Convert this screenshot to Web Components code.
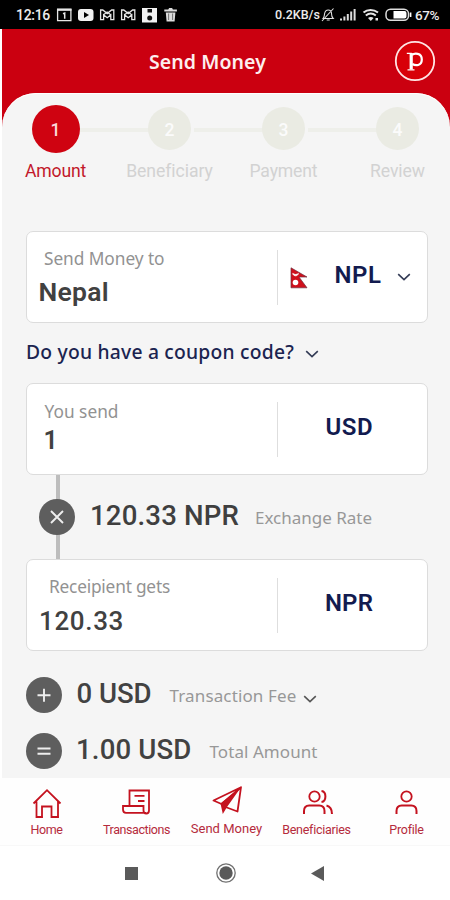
<!DOCTYPE html>
<html lang="en">
<head>
<meta charset="utf-8">
<title>Send Money</title>
<style>
html,body{margin:0;padding:0;background:#fff}
body{width:450px;height:900px;overflow:hidden;font-family:Roboto,"Liberation Sans",sans-serif}
</style>
</head>
<body>
<send-money-app></send-money-app>
<script>
const define = (name, html, setup) => customElements.define(name, class extends HTMLElement {
  connectedCallback() {
    if (this.shadowRoot) return;
    const t = document.createElement('template');
    t.innerHTML = typeof html === 'function' ? html(this) : html;
    this.attachShadow({mode: 'open'}).append(t.content.cloneNode(true));
    if (setup) setup(this);
  }
});

/* One line of text; `w` spreads the letters over a set width. */
define('ui-text', el => `<style>
  :host{display:block;white-space:pre;flex:none;font-size:${el.getAttribute('size')}px;font-weight:${el.getAttribute('weight') || 400};line-height:${el.getAttribute('lh') || 24}px}
  :host([noto]){font-family:"Noto Sans","Open Sans",sans-serif}
  </style><span>${el.getAttribute('text')}</span>`, el => {
  const w = +el.getAttribute('w'), s = el.shadowRoot.querySelector('span');
  if (w) {
    const n = s.textContent.length;
    s.style.letterSpacing = ((w - s.getBoundingClientRect().width) / n).toFixed(3) + 'px';
  }
});

define('chevron-down', `<style>:host{display:block;flex:none;width:14px;height:8px;color:#333b55}svg{display:block}</style>
<svg width="14" height="8" viewBox="0 0 14 8" fill="none" stroke="currentColor" stroke-width="1.6"><path d="M1.2 1.2 7 6.6l5.8-5.4"/></svg>`);

define('status-bar', `<style>
  :host{display:flex;flex:none;box-sizing:border-box;height:29px;background:#000;color:#ececec;padding:0 11px 0 16px;align-items:center;justify-content:space-between}
  div{display:flex;align-items:center}
  svg{display:block;flex:none}
  </style>
  <div><ui-text text="12:16" size="14" weight="500" w="34" lh="30"></ui-text>
  <svg width="122" height="18" viewBox="56 6 122 18" style="margin-left:6px">
    <g fill="none" stroke="#e6e6e6">
      <path stroke-width="1.3" d="M57.6 9.5h13.3v11.2H57.6z"/><path stroke-width="2.2" d="M57 9.7h14.5"/>
      <path stroke-width="1.5" d="M63 13.7l1.7-.6v5.7"/>
      <path stroke-width="1.3" d="M100.6 19.6V10h2.2l4.4 3.6 4.4-3.6h2.2v9.6h-3v-4.7l-3.6 2.8-3.6-2.8v4.7zM103.6 14.7l3.5-2.6 3.7 2.6"/>
      <path stroke-width="1.3" d="M121.6 19.6V10h2.2l4.4 3.6 4.4-3.6h2.2v9.6h-3v-4.7l-3.6 2.8-3.6-2.8v4.7zM124.6 14.7l3.5-2.6 3.7 2.6"/>
    </g>
    <rect x="78" y="9" width="15.5" height="12" rx="3" fill="#f2f2f2"/><path d="M84 12v6l5-3z" fill="#000"/>
    <path d="M142 8h15v14.5h-15z" fill="#f2f2f2"/><path d="M147.500 9h4.500v3.500h-4.500z" fill="#111"/><circle cx="149.700" cy="18" r="2.500" fill="#111"/>
    <path d="M164.3 9.6h4l.8-1.6h3l.8 1.6h4v2h-12.6zM165.8 12.5h9.6l-.8 9h-8z" fill="#dcdcdc"/><path d="M168.6 13.5v6.5m4-6.5v6.5" stroke="#555" stroke-width=".8"/>
  </svg></div>
  <div><ui-text text="0.2KB/s" size="12.500" weight="500" w="45" lh="30"></ui-text>
  <svg width="94" height="18" viewBox="321 6 94 18" style="margin-right:1px">
    <g fill="none" stroke="#e2e2e2" stroke-width="1.1"><path d="M324 18.5c1.6-1.8 1.2-3 1.6-5 .5-2.400 2-3.500 3.600-3.500 2 0 3.300 1.500 3.300 3.500 0 2 .2 3.400 1.700 5zM327.700 20h3M323 21l11.500-12.500"/></g>
    <path d="M341 18.500h2V20.500h-2zM344.400 16.500h2v4h-2zM347.800 14h2v6.500h-2zM351.200 11.500h2v9h-2zM354.600 9h2v11.500h-2z" fill="#ddd"/>
    <g fill="none" stroke="#e6e6e6" stroke-width="2"><path d="M364.500 12.500c4-3.500 10-3.500 14.500 0M366.800 15.500c3-2.400 7-2.400 10 0"/></g>
    <path d="M369 18c1.700-1.400 4-1.400 5.600 0l-2.800 3zM376.500 18h2.500v2.500h-2.500z" fill="#e6e6e6"/>
    <rect x="387" y="9.200" width="22.500" height="11" rx="4.500" fill="none" stroke="#ddd" stroke-width="1.500"/><path d="M394.500 11h11a2 2 0 0 1 2 2v3.500a2 2 0 0 1-2 2h-11zM410.800 12.500h1.600v4.500h-1.600z" fill="#fff"/>
  </svg>
  <ui-text text="67%" size="13.500" weight="500" w="24" lh="30"></ui-text></div>`);

define('app-header', `<style>
  :host{display:flex;justify-content:space-between;height:64px;color:#fdeeee;align-items:flex-start}
  ui-text{margin:20px 0 0 147px}
  .logo{margin:11px 14.500px 0 0;display:block}
  </style>
  <ui-text noto text="Send Money" size="19.500" weight="600" w="117" lh="26"></ui-text>
  <svg class="logo" width="42" height="42" viewBox="0 0 42 42"><circle cx="21" cy="21" r="19.200" fill="#d80008" stroke="#ffe4e4" stroke-width="1.800"/>
  <g fill="none" stroke="#fff"><path d="M17.200 13v16.500" stroke-width="3.200"/><path d="M12.800 13.300h5M13.500 29.800h7" stroke-width="1.300"/><path d="M18 15c2.200-2 9.800-2.600 9.800 4.500 0 6.500-6.300 6.500-9.500 4.500" stroke-width="2.200"/></g></svg>`);

define('step-item', el => `<style>
  :host{display:grid;grid-template-rows:49px 6px 24px;justify-items:center;align-items:center;color:#d2d2d2;position:relative}
  .dot{width:43px;height:43px;border-radius:50%;background:#eaebe3;color:#fbfbfb;display:grid;place-items:center;z-index:1}
  .dot ui-text{padding-top:3px}
  :host([active]){color:#c2182b}
  :host([active]) .dot{width:48px;height:48px;background:#cf0311;color:#fbd9da}
  .label{grid-row:3}
  :host(:not([last]))::after{content:"";position:absolute;left:calc(50% + 24px);width:69px;top:24px;height:4px;background:#eeefea}
  </style>
  <div class="dot"><ui-text text="${el.getAttribute('n')}" size="17.500" weight="500"></ui-text></div>
  <ui-text class="label" text="${el.getAttribute('label')}" w="${el.getAttribute('w')}" size="17.600"></ui-text>`);

define('amount-card', `<style>
  :host{display:grid;flex:none;grid-template-columns:250.500px 1px 1fr;box-sizing:border-box;width:402px;height:92px;margin-left:23.500px;border:1px solid #dcdcdc;border-radius:7px;background:#fff}
  .left{padding-top:var(--label-top,15px);display:flex;flex-direction:column;color:#929292}
  .line{background:#dedede;margin:18px 0 17px}
  .right{display:flex;padding-top:28px;color:#121b4f}
  </style><div class="left"><slot name="label"></slot><slot name="value"></slot></div><div class="line"></div><div class="right"><slot name="unit"></slot></div>`);

define('op-badge', el => `<style>:host{display:block;flex:none;width:36px;height:36px;border-radius:50%;background:#5e5e5e}svg{display:block}</style>
<svg width="36" height="36" viewBox="0 0 36 36" fill="none" stroke="#eee" stroke-width="1.900"><path d="${{times:'M12 12l12 12M24 12 12 24',plus:'M11.500 18.300h13M18 11.800v13',equals:'M11.500 15.500h13M11.500 20.800h13'}[el.getAttribute('op')]}"/></svg>`);

define('nav-item', el => `<style>
  :host{display:flex;flex-direction:column;align-items:center;color:#b52b3c;width:90px}
  svg{display:block;margin-top:${el.getAttribute('top') || 6}px;fill:none;stroke:#c4121f;stroke-width:1.800}
  ui-text{margin-top:1px}
  </style><svg width="36" height="36" viewBox="0 0 36 36">${{
  home:'<path d="M4.500 19.500 18 6.200l13.500 13.300M7.500 17.500V33H13V22.500h9.500V33H29V17.500"/><path d="M7 33h6.500M22 33h7.500"/>',
  bill:'<path d="M10.500 22V6.500H30v20c0 4-5.500 4-5.500 0V22H4v3.500c0 2 1.200 3.300 3 3.300h20M15.500 11.800h10M19 17h6.500"/>',
  plane:'<path d="M32 4.200 4.500 17.500l8 3.500L32 4.200 28.500 28.500 16.500 24" stroke-linejoin="round"/><path d="M11.500 20.500 32 4.200 18 24 13.800 31z" fill="#c4121f" stroke="none"/>',
  users:'<circle cx="15.500" cy="12.500" r="5.200"/><path d="M5 30v-3c0-3.700 2-5.500 5.200-5.500h10c3.300 0 5.300 1.800 5.300 5.500v3M22.500 7c5.200.6 5.200 10.300 0 11M27.500 21.500c3.800 1 5.500 3 5.500 8.500" stroke-width="2"/>',
  user:'<circle cx="17.500" cy="12.500" r="5.200"/><path d="M7.500 30v-3c0-3.700 2-5.500 5.200-5.500h9.600c3.300 0 5.200 1.800 5.200 5.500v3" stroke-width="2"/>'}[el.getAttribute('icon')]}</svg>
  <ui-text text="${el.getAttribute('label')}" size="${el.getAttribute('size') || 12.5}" w="${el.getAttribute('w')}" lh="18"></ui-text>`);

define('tab-bar', `<style>:host{display:flex;flex:none;height:67px;padding-left:1.500px;background:#fefefe;border-bottom:1px solid #f8f8f8;width:451px}</style>
<nav-item icon="home" label="Home" w="32"></nav-item>
<nav-item icon="bill" label="Transactions" w="67"></nav-item>
<nav-item icon="plane" label="Send Money" w="71.500" size="13" top="5"></nav-item>
<nav-item icon="users" label="Beneficiaries" w="68"></nav-item>
<nav-item icon="user" label="Profile" w="34"></nav-item>`);

define('system-nav', `<style>:host{display:flex;flex:none;height:54px;align-items:center;padding-left:125px;gap:84px;background:#fff}svg{display:block}</style>
<svg width="13" height="13"><rect width="13" height="13" fill="#5a5a5a"/></svg>
<svg width="22" height="22" viewBox="0 0 22 22" style="margin-left:-7.500px"><circle cx="11" cy="11" r="9.200" fill="none" stroke="#707070" stroke-width="1.300"/><circle cx="11" cy="11" r="6.700" fill="#5a5a5a"/></svg>
<svg width="13" height="15" style="margin-left:-10px"><path d="M13 0v15L0 7.500z" fill="#5a5a5a"/></svg>`);

define('send-money-app', `<style>
  :host{display:flex;flex-direction:column;width:450px;height:900px;overflow:hidden}
  .page{flex:none;height:749px;margin-left:2px;background:linear-gradient(#cb0010 130px,#f5f5f5 130px)}
  .panel{height:685px;background:#f5f5f5;border-radius:34px 34px 0 0;overflow:hidden;display:flex;flex-direction:column;box-shadow:inset 0 1px #fff}
  .panel>*{flex:none}
  .steps{display:grid;grid-template-columns:repeat(4,114px);margin:11px 0 0 -3.500px;height:127px;align-items:start}
  .coupon{height:60px;display:flex;align-items:flex-start;padding-left:24px;color:#1b2450}
  .coupon chevron-down{margin:27px 0 0 11px}
  .rate{height:84px;display:flex;padding-left:37px;position:relative;color:#3f3f3f}
  .rate::before{content:"";position:absolute;left:54px;top:0;width:4px;height:84px;background:#bdbdbd}
  .rate op-badge{margin-top:24px;z-index:1}
  .row{height:56px;display:flex;padding-left:23.500px;color:#424242}
  .row.first{padding-top:26px}
  .note{color:#989898}
  .val{color:#414141}
  </style>
  <status-bar></status-bar>
  <div class="page">
  <app-header></app-header>
  <div class="panel">
    <div class="steps">
      <step-item active n="1" label="Amount" w="61"></step-item>
      <step-item n="2" label="Beneficiary" w="86"></step-item>
      <step-item n="3" label="Payment" w="68"></step-item>
      <step-item last n="4" label="Review" w="55"></step-item>
    </div>
    <amount-card>
      <ui-text slot="label" noto text="Send Money to" size="17.300" w="120.500" style="margin-left:17.500px"></ui-text>
      <ui-text slot="value" class="val" text="Nepal" size="26.500" weight="600" w="70.500" lh="30" style="margin:6px 0 0 12px"></ui-text>
      <svg slot="unit" width="18" height="22" viewBox="0 0 18 22" style="margin:7px 0 0 12px"><path d="M1 .8 17 10H9l8 10.800H1z" fill="#d0101c" stroke="#6d3040" stroke-width=".7"/><circle cx="5.500" cy="15.500" r="2.800" fill="#fff"/><path d="M2.800 6.500c.5 3 5 3 5.500 0-.7 1.300-4.500 1.300-5.500 0z" fill="#fff" stroke="#fff"/></svg>
      <ui-text slot="unit" text="NPL" size="24" weight="600" w="47" lh="30" style="margin-left:26.500px"></ui-text>
      <chevron-down slot="unit" style="margin:13px 0 0 15px"></chevron-down>
    </amount-card>
    <div class="coupon"><ui-text noto text="Do you have a coupon code?" size="19.300" weight="500" w="268" style="margin-top:17px"></ui-text><chevron-down></chevron-down></div>
    <amount-card style="--label-top:15.500px">
      <ui-text slot="label" noto text="You send" size="17.300" w="74" style="margin-left:18px"></ui-text>
      <ui-text slot="value" class="val" text="1" size="25" weight="600" lh="30" style="margin:2.600px 0 0 17px"></ui-text>
      <ui-text slot="unit" text="USD" size="24" weight="600" w="47.500" lh="30" style="margin-left:47.500px"></ui-text>
    </amount-card>
    <div class="rate"><op-badge op="times"></op-badge>
      <ui-text text="120.33 NPR" size="27.600" weight="500" w="149" lh="30" style="margin:26px 0 0 15px"></ui-text>
      <ui-text noto class="note" text="Exchange Rate" size="17" w="117" style="margin:31px 0 0 16px"></ui-text></div>
    <amount-card>
      <ui-text slot="label" noto text="Receipient gets" size="17.300" w="121" style="margin-left:22.500px"></ui-text>
      <ui-text slot="value" class="val" text="120.33" size="26" weight="500" w="85" lh="30" style="margin:6.500px 0 0 12.500px"></ui-text>
      <ui-text slot="unit" text="NPR" size="24" weight="600" w="48" lh="30" style="margin-left:47px"></ui-text>
    </amount-card>
    <div class="row first"><op-badge op="plus"></op-badge>
      <ui-text text="0 USD" size="27.600" weight="500" w="75" lh="30" style="margin:2px 0 0 15px"></ui-text>
      <ui-text noto class="note" text="Transaction Fee" size="17" w="127" style="margin:7px 0 0 18px"></ui-text>
      <chevron-down style="margin:18px 0 0 6.500px;color:#555"></chevron-down></div>
    <div class="row"><op-badge op="equals"></op-badge>
      <ui-text text="1.00 USD" size="27.600" weight="500" w="115.500" lh="30" style="margin:2px 0 0 14.500px"></ui-text>
      <ui-text noto class="note" text="Total Amount" size="17" w="108" style="margin:7px 0 0 18px"></ui-text></div>
  </div></div>
  <tab-bar></tab-bar>
  <system-nav></system-nav>`);
</script>
</body>
</html>
